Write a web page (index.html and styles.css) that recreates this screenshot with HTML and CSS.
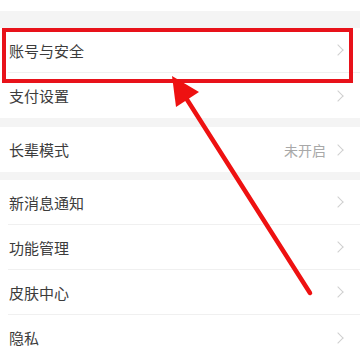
FILE: index.html
```html
<!DOCTYPE html>
<html lang="zh-CN">
<head>
    <meta charset="UTF-8">
    <meta name="viewport" content="width=device-width, initial-scale=1.0">
    <title>设置</title>
    <link rel="stylesheet" href="styles.css">
</head>
<body>
    <div class="top-bar"></div>

    <div class="group first">
        <div class="row">
            <span class="row-title">账号与安全</span>
            <span class="chevron"></span>
        </div>
        <div class="row">
            <span class="row-title">支付设置</span>
            <span class="chevron"></span>
        </div>
    </div>

    <div class="group">
        <div class="row">
            <span class="row-title">长辈模式</span>
            <span class="row-value">未开启</span>
            <span class="chevron"></span>
        </div>
    </div>

    <div class="group">
        <div class="row">
            <span class="row-title">新消息通知</span>
            <span class="chevron"></span>
        </div>
        <div class="row">
            <span class="row-title">功能管理</span>
            <span class="chevron"></span>
        </div>
        <div class="row">
            <span class="row-title">皮肤中心</span>
            <span class="chevron"></span>
        </div>
        <div class="row">
            <span class="row-title">隐私</span>
            <span class="chevron"></span>
        </div>
    </div>

    <!-- annotation drawn over the screenshot -->
    <div class="highlight"></div>
    <svg class="arrow" width="360" height="360" viewBox="0 0 360 360">
        <line x1="310" y1="293" x2="186" y2="98" stroke="#ee1111" stroke-width="4.5" stroke-linecap="round"/>
        <polygon points="172,76 199,92 176,107" fill="#ee1111"/>
    </svg>
</body>
</html>
```

FILE: styles.css
```css
* {
    margin: 0;
    padding: 0;
    box-sizing: border-box;
}

body {
    width: 360px;
    height: 360px;
    overflow: hidden;
    background-color: #f4f4f4;
    font-family: 'Noto Sans CJK SC', 'Noto Sans', sans-serif;
    color: #3c3c3c;
    position: relative;
}

.top-bar {
    height: 11px;
    background-color: #ffffff;
    margin-bottom: 17px;
}

.group {
    background-color: #ffffff;
    margin-bottom: 8px;
}

.group.first {
    margin-bottom: 9px;
}

.row {
    height: 45px;
    margin-left: 8px;
    padding-right: 16px;
    display: flex;
    align-items: center;
    border-bottom: 1px solid #f0f0f0;
}

.row:last-child {
    border-bottom: none;
}

.row-title {
    flex: 1;
    font-size: 15px;
    padding-left: 1px;
}

.row-value {
    font-size: 14px;
    color: #a8a8a8;
    margin-right: 8px;
}

.chevron {
    width: 8px;
    height: 8px;
    border-top: 1.2px solid #cfcfcf;
    border-right: 1.2px solid #cfcfcf;
    transform: rotate(45deg);
    margin-right: 2px;
}

.highlight {
    position: absolute;
    left: 2px;
    top: 28px;
    width: 351px;
    height: 55px;
    border: 4px solid #e8121a;
}

.arrow {
    position: absolute;
    left: 0;
    top: 0;
}
```
